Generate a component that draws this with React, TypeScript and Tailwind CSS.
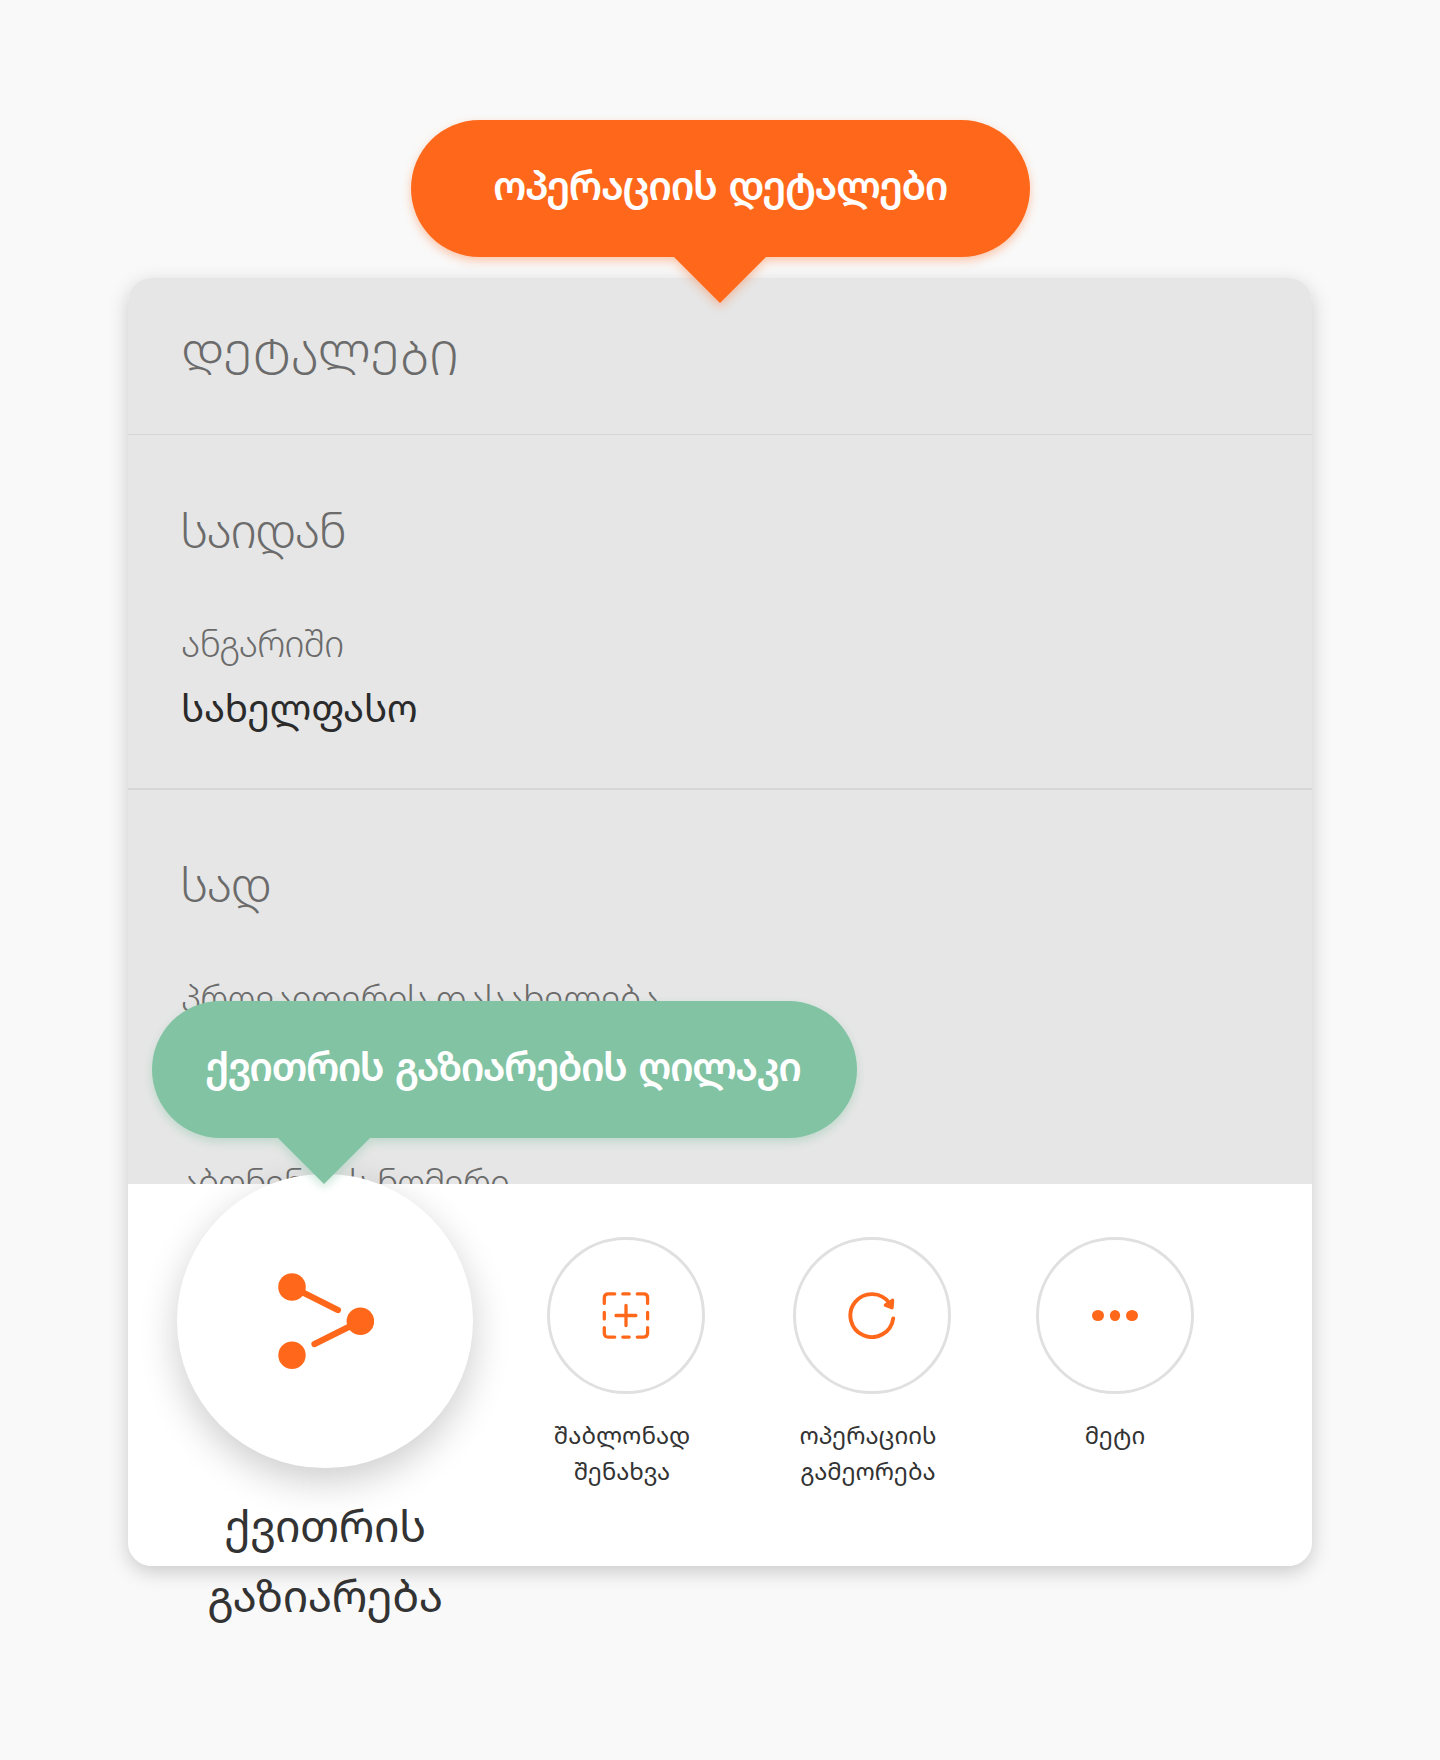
import type { ReactNode } from "react";

function Tail({ className }: { className: string }) {
  return (
    <svg viewBox="0 0 94 47" className={"absolute top-full -mt-px h-[47px] w-[94px] " + className} fill="currentColor">
      <path d="M0 0H94L47 47Z" />
    </svg>
  );
}

function ShareIcon() {
  return (
    <svg viewBox="0 0 96 96" className="ml-[2px] size-24" fill="#ff681a" stroke="#ff681a" strokeWidth="6.4" strokeLinecap="round">
      <g stroke="none">
        <circle cx="14" cy="14" r="13.8" />
        <circle cx="82.4" cy="48.2" r="13.8" />
        <circle cx="14" cy="82.3" r="13.7" />
      </g>
      <path d="M14 14L59.8 37M82.4 48.2L36.6 71" fill="none" />
    </svg>
  );
}

function TemplateIcon() {
  return (
    <svg viewBox="0 -0.5 48 48" className="-mt-px size-12" fill="none" stroke="#ff681a" strokeWidth="3.3" strokeLinecap="round">
      <path d="M2.3 11.9V6.3Q2.3 2.4 6.3 2.4H12.7M35.3 2.4H41.7Q45.6 2.4 45.6 6.3V11.9M45.6 36.1V41.6Q45.6 45.6 41.7 45.6H35.3M12.7 45.6H6.3Q2.3 45.6 2.3 41.6V36.1" />
      <path d="M20.8 2.4H27.2M20.8 45.6H27.2M2.3 20.8V27.4M45.6 20.8V27.4M14 24H33.9M24 14V34" />
    </svg>
  );
}

function RepeatIcon() {
  return (
    <svg viewBox="0 -0.5 48 48" className="-mt-px size-12" fill="none" stroke="#ff681a" strokeWidth="3.9" strokeLinecap="round" strokeLinejoin="round">
      <path d="M45.2 27A21.5 21.5 0 1 1 41.4 11.6" />
      <path d="M44.5 8.8L37.4 13.6L44 16.2Z" fill="#ff681a" strokeWidth="3.4" />
    </svg>
  );
}

function MoreIcon() {
  return (
    <svg viewBox="0 -0.5 48 48" className="-mt-px size-12" fill="#ff681a">
      <ellipse cx="7" cy="24" rx="6" ry="5.6" />
      <ellipse cx="24" cy="24" rx="5.1" ry="5.6" />
      <ellipse cx="41" cy="24" rx="6" ry="5.6" />
    </svg>
  );
}

function Action({ icon, children, className = "", labelClass = "" }: { icon: ReactNode; children: ReactNode; className?: string; labelClass?: string }) {
  return (
    <div className={"w-[158px] shrink-0 pt-[53px] " + className}>
      <div className="flex h-[157px] items-center justify-center rounded-full border-[3px] border-[#e0e0e0]">{icon}</div>
      <p className={"mt-[23px] text-center text-[24px] leading-9 text-[#333] " + labelClass}>{children}</p>
    </div>
  );
}

export default function App() {
  return (
    <div className="flex h-[1760px] w-[1440px] flex-col items-center overflow-hidden bg-[#f9f9f9] pt-[120px] font-['Noto_Sans_Georgian','Noto_Sans',sans-serif]">
      <div className="relative z-10 flex h-[137px] w-[619px] shrink-0 items-center justify-center rounded-full bg-[#ff681a] pb-[8px] drop-shadow-[0_4px_5px_rgba(255,104,26,0.35)]">
        <h1 className="text-[40px] leading-[60px] font-[640] tracking-[-1.45px] [word-spacing:3px] whitespace-nowrap text-white">ოპერაციის დეტალები</h1>
        <Tail className="left-[262px] text-[#ff681a]" />
      </div>

      <div className="relative mt-[21px] w-[1184px] shrink-0 rounded-[24px] shadow-[0_6px_20px_rgba(0,0,0,0.19)]">
        <div className="h-[906px] overflow-hidden rounded-t-[24px] bg-[#e6e6e6] text-[#6b6b6b]">
          <div className="h-[157px] border-b border-[#d6d6d6] pt-[49px] pl-[53px]">
            <h2 className="text-[48px] leading-[60px] font-[340]">ᲓᲔᲢᲐᲚᲔᲑᲘ</h2>
          </div>
          <section className="h-[355px] border-b-2 border-[#d6d6d6] pt-[65px] pl-[52px]">
            <h3 className="text-[47.5px] leading-[60px] font-[350] tracking-[-1.5px]">საიდან</h3>
            <p className="mt-[59px] ml-px text-[36px] leading-[50px] font-[320] tracking-[-0.75px]">ანგარიში</p>
            <p className="mt-[13px] ml-px text-[38.5px] leading-[50px] tracking-[-0.35px] text-[#2b2b2b]">სახელფასო</p>
          </section>
          <section className="pt-[64px] pl-[52px]">
            <h3 className="text-[47.5px] leading-[60px] font-[350] tracking-[-1.4px]">სად</h3>
            <p className="mt-[60px] ml-px text-[36px] leading-[50px] font-[320] tracking-[-0.83px]">პროვაიდერის დასახელება</p>
            <p className="mt-[134px] text-[36px] leading-[50px] font-[320] tracking-[-1.2px]">აბონენტის ნომერი</p>
          </section>
        </div>

        <div className="flex h-[382px] rounded-b-[24px] bg-white pl-[49px]">
          <div className="relative -mt-[10px] w-[296px] shrink-0">
            <div className="flex h-[294px] items-center justify-center rounded-full bg-white shadow-[0_13px_38px_rgba(0,0,0,0.2)]">
              <ShareIcon />
            </div>
            <p className="mt-[22px] text-center text-[44.5px] leading-[70px] tracking-[-0.45px] text-[#333]">
              ქვითრის
              <br />
              გაზიარება
            </p>
          </div>
          <Action icon={<TemplateIcon />} className="ml-[74px]" labelClass="pr-2">
            შაბლონად
            <br />
            შენახვა
          </Action>
          <Action icon={<RepeatIcon />} className="ml-[88px]" labelClass="pr-2">
            ოპერაციის
            <br />
            გამეორება
          </Action>
          <Action icon={<MoreIcon />} className="ml-[85px]">მეტი</Action>
        </div>

        <div className="absolute top-[723px] left-[24px] flex h-[137px] w-[705px] items-center rounded-full bg-[#81c3a3] pb-[8px] pl-[53px] drop-shadow-[0_4px_5px_rgba(129,195,163,0.4)]">
          <p className="text-[40px] leading-[60px] font-[640] tracking-[-1.62px] [word-spacing:3px] whitespace-nowrap text-white">ქვითრის გაზიარების ღილაკი</p>
          <Tail className="left-[125px] text-[#81c3a3]" />
        </div>
      </div>
    </div>
  );
}
